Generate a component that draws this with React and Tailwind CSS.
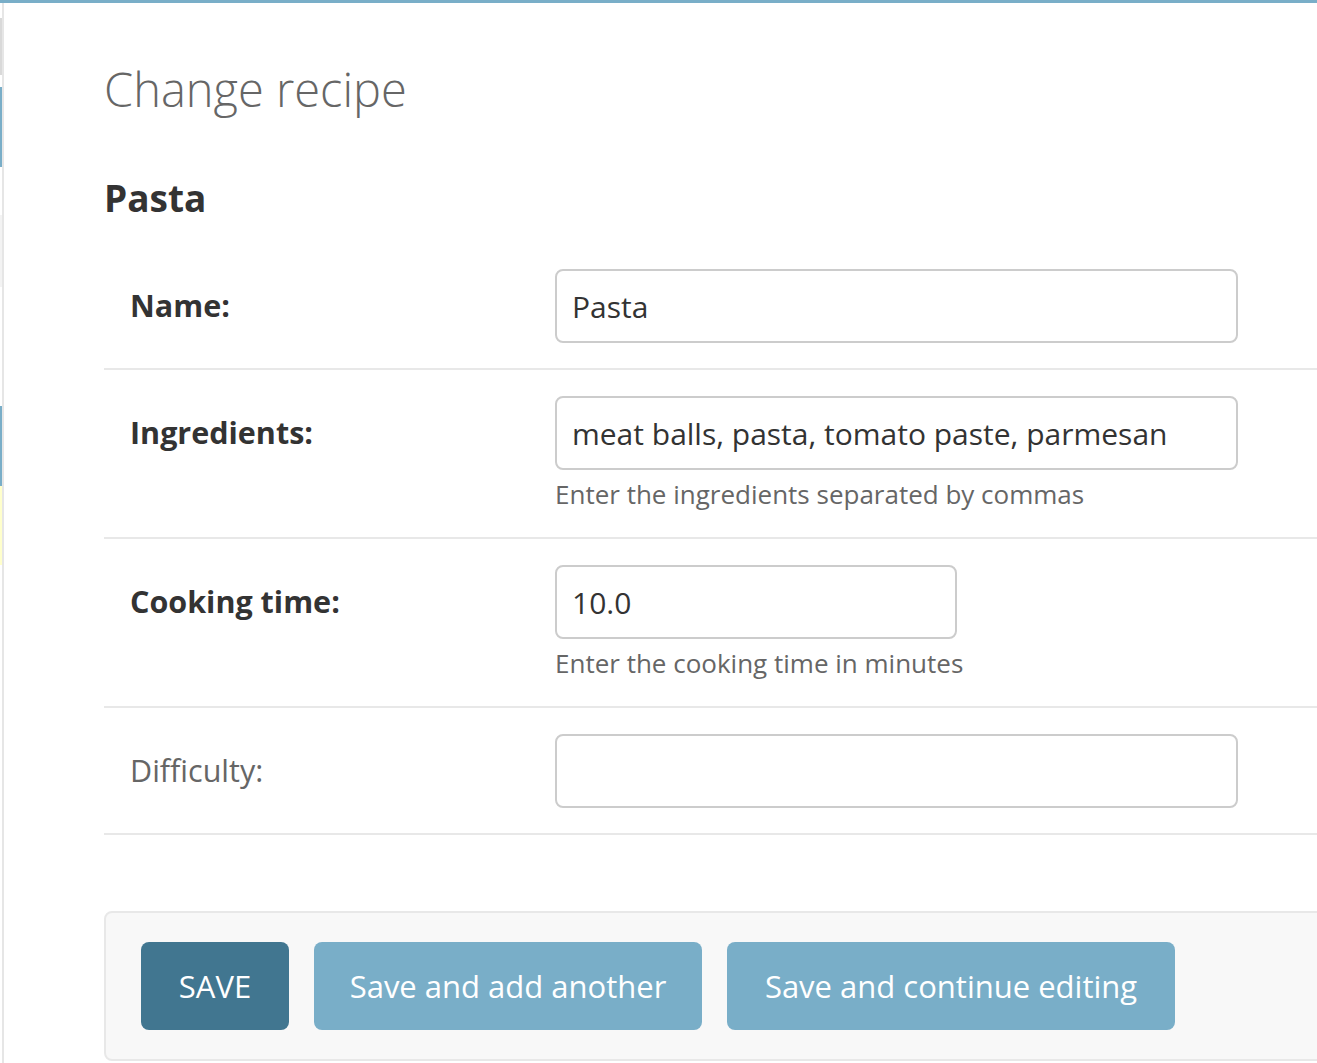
import React from 'react';

const font = { fontFamily: '"Open Sans", "Noto Sans", sans-serif' };

const fields = [
  { label: 'Name:', value: 'Pasta', required: true, wide: true },
  {
    label: 'Ingredients:',
    value: 'meat balls, pasta, tomato paste, parmesan',
    required: true,
    wide: true,
    help: 'Enter the ingredients separated by commas',
  },
  {
    label: 'Cooking time:',
    value: '10.0',
    required: true,
    wide: false,
    help: 'Enter the cooking time in minutes',
  },
  { label: 'Difficulty:', value: '', required: false, wide: true },
];

function SideStrip() {
  return (
    <div className="flex shrink-0">
      <div className="flex w-[2px] flex-col">
        <div className="h-[15px] bg-white" />
        <div className="h-[57px] bg-[#d9d9d9]" />
        <div className="h-[12px] bg-white" />
        <div className="h-[80px] bg-[#79aec8]" />
        <div className="h-[48px] bg-white" />
        <div className="h-[72px] bg-[#f3f3f3]" />
        <div className="h-[119px] bg-white" />
        <div className="h-[80px] bg-[#79aec8]" />
        <div className="h-[79px] bg-[#ffffcc]" />
        <div className="flex-1 bg-white" />
      </div>
      <div className="w-[2px] bg-[#e6e6e6]" />
    </div>
  );
}

function FieldRow({ field }) {
  return (
    <div className="flex border-b-2 border-[#e8e8e8] px-[26px] pt-[26px] pb-[25px]">
      <label
        className={`flex h-[74px] w-[425px] shrink-0 items-center text-[30.5px] ${
          field.required ? 'font-bold text-[#333]' : 'font-normal text-[#666]'
        }`}
      >
        {field.label}
      </label>
      <div className="flex flex-col">
        <input
          readOnly
          value={field.value}
          className={`h-[74px] rounded-[8px] border-2 border-[#cccccc] bg-white px-[15px] text-[30px] text-[#333] outline-none ${
            field.wide ? 'w-[683px]' : 'w-[402px]'
          }`}
          style={font}
        />
        {field.help && (
          <div className="mt-[7px] text-[26px] leading-[35px] text-[#666]">{field.help}</div>
        )}
      </div>
    </div>
  );
}

export default function App() {
  return (
    <div className="min-h-[1063px] overflow-hidden bg-white" style={font}>
      <div className="h-[3px] bg-[#79aec8]" />
      <div className="flex min-h-[1060px]">
        <SideStrip />
        <main className="flex-1 overflow-hidden pl-[100px] pt-[59px]">
          <div className="w-[1300px]">
            <h1 className="text-[47px] font-light leading-[55px] text-[#666]">Change recipe</h1>
            <h2 className="mt-[57px] text-[37px] font-bold leading-[48px] text-[#333]">Pasta</h2>

            <div className="mt-[21px]">
              {fields.map((f) => (
                <FieldRow key={f.label} field={f} />
              ))}
            </div>

            <div className="mt-[76px] flex gap-[25px] rounded-[8px] border-2 border-[#e8e8e8] bg-[#f8f8f8] px-[35px] py-[29px]">
              <button className="h-[88px] w-[148px] rounded-[8px] bg-[#417690] text-[31px] text-white">
                SAVE
              </button>
              <button className="h-[88px] w-[388px] rounded-[8px] bg-[#79aec8] text-[31px] text-white">
                Save and add another
              </button>
              <button className="h-[88px] w-[448px] rounded-[8px] bg-[#79aec8] text-[31px] text-white">
                Save and continue editing
              </button>
            </div>
          </div>
        </main>
      </div>
    </div>
  );
}
